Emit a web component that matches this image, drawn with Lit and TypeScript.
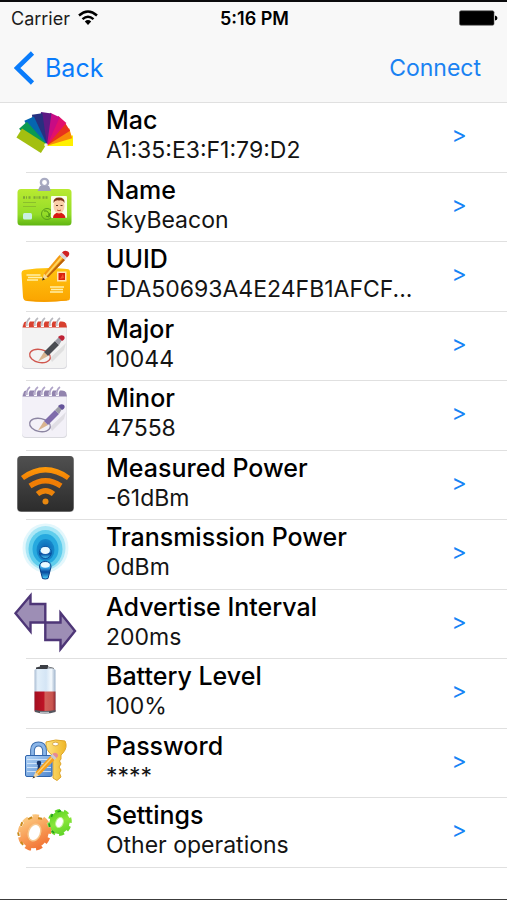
import { LitElement, html, css, svg, TemplateResult } from "lit";
import { customElement, property } from "lit/decorators.js";

const SWATCHES = [
  { color: "#fff000", length: 27 },
  { color: "#f88a08", length: 27 },
  { color: "#e8331c", length: 28 },
  { color: "#e2106c", length: 30 },
  { color: "#c80b84", length: 31 },
  { color: "#5e1a84", length: 32 },
  { color: "#27307f", length: 32 },
  { color: "#0566b0", length: 31 },
  { color: "#0a9a52", length: 30 },
  { color: "#a3bf10", length: 29 },
];

const notepad = (strip: string, ring: string, mark: string, pen: string, tip: string, paper: string) => svg`
  <rect x="22" y="11" width="45" height="46" rx="4" fill="#d9d9de"/>
  <rect x="22" y="11" width="44.500" height="45" rx="4" fill=${paper}/>
  <path d="M22.500 15.500 L24 10.500 Q25 9.500 27 9.500 H62 Q65 9.500 66 11.500 L67 15.500Z" fill=${strip}/>
  ${[28, 36, 43, 51, 58].map((x) => svg`
    <path d="M${x - 2} 15 q-1 -4 1 -6 l3 0 q-2 3 -1 6z" fill="#fff"/>
    <path d="M${x - 1} 14 q-1 -5 3 -8" fill="none" stroke=${ring} stroke-width="1.600"/>`)}
  <path d="M50 46 L66 31 L64 38 L52 50Z" fill="#000" opacity=".08"/>
  <ellipse cx="40" cy="44" rx="10.500" ry="6.500" transform="rotate(12 40 44)" fill="none" stroke=${mark} stroke-width="1.300"/>
  <path d="M38 49.500 L44 40 L48 44Z" fill="#d9b48f"/>
  <path d="M44 40 L55 29 L59 33 L48 44Z" fill=${pen}/>
  <path d="M55 29 L59 25 L62 28 L59 33Z" fill="#9c9ca6"/>
  <path d="M58 25 Q61 22 64 24 Q66 27 62 29Z" fill=${tip}/>`;

const icons: Record<string, TemplateResult> = {
  palette: svg`
    <g transform="translate(46 42)">
      ${SWATCHES.map((s, i) => svg`<rect x="0" y="-9.500" width=${s.length} height="10.500" fill=${s.color} transform="rotate(${-16.4 * i})"/>`)}
      <circle r="1.800" cy="0" fill="#fff" opacity=".9"/>
    </g>`,
  badge: svg`
    <defs><linearGradient id="card" x1="0" y1="0" x2="0" y2="1"><stop offset="0" stop-color="#b9ea31"/><stop offset=".7" stop-color="#93dc28"/><stop offset="1" stop-color="#5fb512"/></linearGradient></defs>
    <rect x="17.500" y="16" width="54" height="36.500" rx="3.500" fill="url(#card)"/>
    <circle cx="44.500" cy="9.500" r="3.600" fill="none" stroke="#a9abc2" stroke-width="2.400"/>
    <path d="M40 13 H49 L51 18 H37.500Z" fill="#9fa1b9"/>
    <path d="M23 24.500 h4 m1.500 0 h3 m2 0 h4 m1 0 h3 m1 0 h5" stroke="#7fa535" stroke-width="2.600" stroke-dasharray="2 1"/>
    <path d="M23 29.500 h13 M23 33.500 h13" stroke="#8abf2c" stroke-width="1.200"/>
    <circle cx="47" cy="41" r="5.500" fill="none" stroke="#5c9e1c" stroke-width="1"/>
    <path d="M44 38 q5 -1 5 5 M46 43 l3 1 l1 -4" fill="none" stroke="#4c9115"/>
    <rect x="23" y="40" width="9" height="6.500" rx="1.500" fill="#c9f0e2"/>
    <rect x="51" y="23" width="16" height="22" rx="1" fill="#fbffe8"/>
    <path d="M53 45 Q53 40 59 39.500 Q65 40 65.500 45Z" fill="#d81a12"/>
    <ellipse cx="59" cy="33" rx="5.500" ry="7.500" fill="#fbcfa9"/>
    <path d="M53.500 30 Q53 24.500 59 24.500 Q65 24.500 64.500 30 Q63 26.500 59 27.500 Q55 26.500 53.500 30Z" fill="#7c3213"/>
    <path d="M56 32.500 h2 m2.500 0 h2" stroke="#553019"/><path d="M57 37 q2 1.500 4 0" fill="none" stroke="#c04b30"/>`,
  envelope: svg`
    <defs><linearGradient id="env" x1="0" y1="0" x2="0" y2="1"><stop offset="0" stop-color="#ffc411"/><stop offset="1" stop-color="#fba400"/></linearGradient></defs>
    <path d="M24 28 Q45 24.500 67 27 Q70 27 70 30 V56 Q70 59 67 58.500 Q46 61 27 59 Q23.500 59 23 55 L21.500 31 Q21.500 28.500 24 28Z" fill="url(#env)"/>
    <path d="M27 58 Q46 60 67 58" fill="none" stroke="#f39a00" stroke-width="1.200"/>
    <path d="M26.500 33 h14 M28 35.500 h14 M27 38 h11" stroke="#fff0a8" stroke-width="1.700"/>
    <path d="M50 45 h14 M51 47.500 h12 M50 50 h13" stroke="#fff0a8" stroke-width="1.700"/>
    <rect x="57" y="29.500" width="9.500" height="10" fill="#ffe3ae"/><rect x="58.500" y="31" width="6.500" height="7" fill="#d9200d"/>
    <path d="M60 37 l3 -5 l1 4z" fill="#f2502e"/>
    <path d="M42 38.500 L44 31.500 L48 35.500Z" fill="#f6d9a0"/><path d="M42 38.500 l1 -3 l2 2z" fill="#3b2a10"/>
    <path d="M44 31.500 L59.500 13 L65 18 L48 35.500Z" fill="#f39a12"/>
    <path d="M45.500 33 L61 14.500 L62.500 16 L46.500 34.200Z" fill="#ffd560"/>
    <path d="M48 35.500 L65 18 L63.500 16.500 L46.800 34.500Z" fill="#b9620c"/>
    <path d="M59.500 13 L62 10.500 L67 15.500 L65 18Z" fill="#d6d6dc"/>
    <path d="M62 10.500 Q64 7.500 68 9.500 Q71 12 67 15.500Z" fill="#cf2222"/>`,
  notepadRed: notepad("#d8402f", "#b9b9bf", "#d0564e", "#4a4c52", "#bf2236", "#f3f3f3"),
  notepadPurple: notepad("#9284ae", "#b0a5c8", "#8c85a2", "#7f6cab", "#65549a", "#f3f1f8"),
  wifi: svg`
    <defs>
      <linearGradient id="box" x1="0" y1="0" x2="0" y2="1"><stop offset="0" stop-color="#505050"/><stop offset="1" stop-color="#2c2c2c"/></linearGradient>
      <linearGradient id="wave" gradientUnits="userSpaceOnUse" x1="0" y1="16" x2="0" y2="54"><stop offset="0" stop-color="#ff9a08"/><stop offset=".4" stop-color="#f07c04"/><stop offset="1" stop-color="#e58a10"/></linearGradient>
    </defs>
    <rect x="17" y="5" width="57" height="56" rx="4" fill="#aaa"/>
    <rect x="17.500" y="5" width="56" height="55.500" rx="4" fill="url(#box)"/>
    <g fill="none" stroke="url(#wave)" stroke-width="5.200">
      <path d="M22.500 27 Q45.500 10.500 68.500 27"/><path d="M30 35 Q45.500 24.500 61 35"/><path d="M37.500 43 Q45.500 36.500 53.500 43"/>
    </g>
    <circle cx="45.500" cy="50.500" r="3" fill="#e98910"/>`,
  antenna: svg`
    <defs>
      <radialGradient id="glow"><stop offset="0" stop-color="#0a5fb0"/><stop offset="1" stop-color="#1689cb"/></radialGradient>
      <linearGradient id="body" x1="0" y1="0" x2="0" y2="1"><stop offset="0" stop-color="#bfeaff"/><stop offset=".35" stop-color="#3aa9ea"/><stop offset=".6" stop-color="#06489c"/><stop offset="1" stop-color="#4fd6ff"/></linearGradient>
    </defs>
    <ellipse cx="45.500" cy="28" rx="23" ry="24.500" fill="#e3f7fc"/>
    <ellipse cx="45.500" cy="28" rx="20" ry="22" fill="#abe7f6"/>
    <ellipse cx="45.500" cy="29" rx="17" ry="19" fill="#5fcdec"/>
    <ellipse cx="45.500" cy="29" rx="13" ry="15" fill="#27a9df"/>
    <ellipse cx="45.500" cy="30" rx="9" ry="11" fill="url(#glow)"/>
    <circle cx="45.300" cy="32.500" r="6" fill="url(#body)" stroke="#0a4f9b"/>
    <ellipse cx="45.300" cy="30.500" rx="4.500" ry="3.400" fill="#eafaff"/>
    <path d="M39.500 47 Q39.500 41.500 45.300 41.500 Q51 41.500 51 47 L48 58.500 Q45.300 59.500 42.500 58.500Z" fill="url(#body)" stroke="#0a3f86"/>
    <ellipse cx="45.300" cy="45" rx="4.400" ry="2.800" fill="#eafaff"/>`,
  arrows: svg`
    <g fill="#9d8eb5" stroke="#4e3677" stroke-width="2.400">
      <path d="M15.500 23.300 L30.500 5.500 V14 H45.300 V32.500 H30.500 V41.500Z"/>
      <path d="M75 41 L60.500 23 V32.500 H45.300 V50 H60.500 V59Z"/>
    </g>`,
  battery: svg`
    <defs>
      <linearGradient id="glass"><stop offset="0" stop-color="#a9bcd2"/><stop offset=".15" stop-color="#e2effa"/><stop offset=".55" stop-color="#d4e5f5"/><stop offset=".8" stop-color="#f4f9fd"/><stop offset="1" stop-color="#9db2ca"/></linearGradient>
      <linearGradient id="charge"><stop offset="0" stop-color="#a30f20"/><stop offset=".45" stop-color="#bf1426"/><stop offset=".5" stop-color="#d2605a"/><stop offset=".85" stop-color="#c9544f"/><stop offset="1" stop-color="#8e2730"/></linearGradient>
    </defs>
    <path d="M36 11 V8.500 L40 7.500 V6 H48 V7.500 L54 9 V11Z" fill="#3c3f45"/><path d="M48 8 L54 9.500 V11 H47Z" fill="#b8c0c8"/>
    <rect x="34.500" y="10" width="21" height="42" rx="1.500" fill="url(#glass)"/>
    <rect x="34.500" y="32.500" width="21" height="20" fill="url(#charge)"/>
    <path d="M35 51 Q45 53 55.500 51 V53 Q45 56 35 53Z" fill="#54575f"/><path d="M40 53.500 h9" stroke="#b5bbc2" stroke-width="1.500"/>`,
  lock: svg`
    <defs>
      <linearGradient id="lockBody" x1="0" y1="0" x2="1" y2="1"><stop offset="0" stop-color="#b6d6f7"/><stop offset="1" stop-color="#4d86cf"/></linearGradient>
      <linearGradient id="key"><stop offset="0" stop-color="#ffe584"/><stop offset="1" stop-color="#efb625"/></linearGradient>
    </defs>
    <path d="M46 13 Q56 9.500 65 12 Q68 18 63 24 L61 26 V30 L59.500 32 L61 35 L59 38 L61 41 L59.500 44 L61 48 L57 51.500 L53 49 V27 Q45 21 46 13Z" fill="url(#key)" stroke="#dfa62c"/>
    <ellipse cx="55.500" cy="15" rx="3" ry="1.800" fill="#fff" stroke="#c8922a" stroke-width=".7"/>
    <path d="M32.500 28 V21 Q33 15 38.500 15 Q44 15 44.500 21 V28" fill="none" stroke="#3e6fae" stroke-width="4.800"/>
    <path d="M32.500 28 V21 Q33 15 38.500 15 Q44 15 44.500 21 V28" fill="none" stroke="#8bb6e8" stroke-width="2.800"/>
    <rect x="25.500" y="26.500" width="26.500" height="21" rx="1.500" fill="url(#lockBody)" stroke="#2f64ad"/>
    <path d="M27 30.500 h24 M27 34.500 h24 M27 38.500 h24 M27 42.500 h24" stroke="#e0effd" stroke-width="1" opacity=".8"/>
    <circle cx="39" cy="34" r="2.300" fill="#173569"/><path d="M38 35 h2 l.6 6 h-3.200z" fill="#173569"/>
    <path d="M32.500 49.500 L35.500 43 L39 46.500Z" fill="#f3d7a2"/><path d="M32.500 49.500 l1.200 -2.600 l1.500 1.400z" fill="#333"/>
    <path d="M35.500 43 L50.500 27 L54.500 31 L39 46.500Z" fill="#f59f1c"/><path d="M36.500 44 L51.500 28 L52.500 29 L37.500 45Z" fill="#ffd070"/>
    <path d="M50.500 27 L52.500 25 L56.500 29 L54.500 31Z" fill="#c9ccd6"/><path d="M52.500 25 Q55 22.500 57.500 25 Q59 27 56.500 29Z" fill="#e58a94"/>`,
  gears: svg`
    <defs>
      <linearGradient id="orange" gradientUnits="userSpaceOnUse" x1="20" y1="22" x2="50" y2="48"><stop offset="0" stop-color="#fbcf86"/><stop offset=".5" stop-color="#f89a54"/><stop offset="1" stop-color="#f06a2c"/></linearGradient>
      <linearGradient id="green" gradientUnits="userSpaceOnUse" x1="48" y1="14" x2="70" y2="36"><stop offset="0" stop-color="#4fd01e"/><stop offset=".5" stop-color="#8ae63a"/><stop offset="1" stop-color="#55cf24"/></linearGradient>
    </defs>
    <g transform="rotate(20 59.500 24.500)" fill="none" stroke="url(#green)">
      <ellipse cx="59.500" cy="24.500" rx="6.500" ry="8" stroke-width="7"/>
      <ellipse cx="59.500" cy="24.500" rx="10.500" ry="12" stroke-width="3.200" stroke-dasharray="5 3.840"/>
      <path d="M54 15 l3 -2 M50 22 l0 -3 M52 32 l-2 -3 M58 36 l-3 -1" stroke="#1f9a22" stroke-width="1.600"/>
      <ellipse cx="59.500" cy="24.500" rx="3.600" ry="5.200" fill="#fff" stroke="#c4f39a" stroke-width="1"/>
    </g>
    <g transform="rotate(20 34.500 34.500)" fill="none" stroke="url(#orange)">
      <ellipse cx="34.500" cy="34.500" rx="9.500" ry="11.500" stroke-width="9"/>
      <ellipse cx="34.500" cy="34.500" rx="14.500" ry="16.500" stroke-width="4" stroke-dasharray="6.200 4.640"/>
      <path d="M24 24 l3 -3 M19.500 33 l0 -4 M21 43 l-2 -3 M28 50 l-3 -2 M33 20 l4 -1" stroke="#c98a1a" stroke-width="2"/>
      <ellipse cx="34.500" cy="34.500" rx="6" ry="8.500" fill="#fff" stroke="#f7c88e" stroke-width="1.400"/>
    </g>`,
};

interface Setting { icon: string; title: string; value: string; }

const SETTINGS: Setting[] = [
  { icon: "palette", title: "Mac", value: "A1:35:E3:F1:79:D2" },
  { icon: "badge", title: "Name", value: "SkyBeacon" },
  { icon: "envelope", title: "UUID", value: "FDA50693A4E24FB1AFCF..." },
  { icon: "notepadRed", title: "Major", value: "10044" },
  { icon: "notepadPurple", title: "Minor", value: "47558" },
  { icon: "wifi", title: "Measured Power", value: "-61dBm" },
  { icon: "antenna", title: "Transmission Power", value: "0dBm" },
  { icon: "arrows", title: "Advertise Interval", value: "200ms" },
  { icon: "battery", title: "Battery Level", value: "100%" },
  { icon: "lock", title: "Password", value: "****" },
  { icon: "gears", title: "Settings", value: "Other operations" },
];

@customElement("setting-row")
export class SettingRow extends LitElement {
  static styles = css`
    :host { display: flex; align-items: flex-start; box-sizing: border-box; min-height: 68px; padding-left: 12px; position: relative; }
    :host::after { content: ""; position: absolute; left: 26px; right: 0; bottom: 0; height: 1px; background: #e0e0e0; }
    .icon { flex: none; width: 68px; height: 68px; display: block; }
    .text { flex: 1; min-width: 0; padding: 2px 0 0 26px; }
    .title, .value { margin: 0; line-height: 30px; white-space: nowrap; }
    .title { font-size: 25px; font-weight: 500; color: #000; }
    .value { font-size: 23px; font-weight: 400; color: #141414; }
    .open { flex: none; width: 96px; height: 64px; padding: 0; border: 0; background: none; color: #1683f5; font: inherit; font-size: 23px; cursor: pointer; }
  `;
  @property({ attribute: false }) item!: Setting;
  render() {
    const { icon, title, value } = this.item;
    return html`
      <svg class="icon" viewBox="12 0 68 68" aria-hidden="true">${icons[icon]}</svg>
      <div class="text"><h2 class="title">${title}</h2><p class="value">${value}</p></div>
      <button class="open" aria-label="Open ${title}">&gt;</button>`;
  }
}

@customElement("app-root")
export class AppRoot extends LitElement {
  static styles = css`
    :host { display: flex; flex-direction: column; box-sizing: border-box; min-height: 100vh; background: #fff; color: #000; border-top: 2px solid #0b0b0d; border-bottom: 1px solid #3c3c3c; font-family: Inter, "Liberation Sans", sans-serif; }
    .header { background: #f8f8f8; border-bottom: 1px solid #e0e0e0; }
    .status { display: grid; grid-template-columns: 1fr auto 1fr; align-items: center; height: 32px; padding: 0 9px 0 11px; font-size: 18px; }
    .carrier { display: flex; align-items: center; gap: 8px; color: #1c1c1c; }
    .wifi { width: 20px; height: 16px; }
    .time { font-weight: 600; }
    .battery { width: 39px; height: 16px; justify-self: end; }
    .nav { display: flex; align-items: center; justify-content: space-between; height: 68px; padding: 0 26px 0 14px; }
    .link { display: flex; align-items: center; gap: 10px; padding: 0; border: 0; background: none; font: inherit; cursor: pointer; }
    .back { font-size: 25px; color: #0a7cfb; }
    .connect { font-size: 23px; color: #1a82f2; }
    .chevron { width: 21px; height: 34px; }
    .list { flex: 1; display: flex; flex-direction: column; margin: 0; padding: 0 0 31px; list-style: none; }
    .item { flex: 1; display: grid; grid-template-columns: minmax(0, 1fr); }
  `;
  render() {
    return html`
      <header class="header">
        <div class="status">
          <span class="carrier">Carrier
            <svg class="wifi" viewBox="0 0 20 16" aria-hidden="true">
              <g fill="none" stroke="#000" stroke-width="2.400"><path d="M1 5.500 Q10 -2.500 19 5.500"/><path d="M4.500 9.200 Q10 4.200 15.500 9.200"/></g>
              <path d="M6.800 11.400 Q10 8.800 13.200 11.400 L10 15Z"/>
            </svg>
          </span>
          <span class="time">5:16 PM</span>
          <svg class="battery" viewBox="0 0 39 16" aria-hidden="true"><rect x=".5" y=".8" width="34.500" height="14.400" rx="1.500" stroke="#555" stroke-width=".6"/><path d="M36 5.500 Q38.500 6 38.500 8 Q38.500 10 36 10.500Z"/></svg>
        </div>
        <nav class="nav">
          <button class="link back">
            <svg class="chevron" viewBox="0 0 21 34" aria-hidden="true"><path d="M18.500 2 L3 17 L18.500 32" fill="none" stroke="#0a7cfb" stroke-width="4.600"/></svg>
            Back
          </button>
          <button class="link connect">Connect</button>
        </nav>
      </header>
      <ul class="list">
        ${SETTINGS.map((s) => html`<li class="item"><setting-row .item=${s}></setting-row></li>`)}
      </ul>`;
  }
}
